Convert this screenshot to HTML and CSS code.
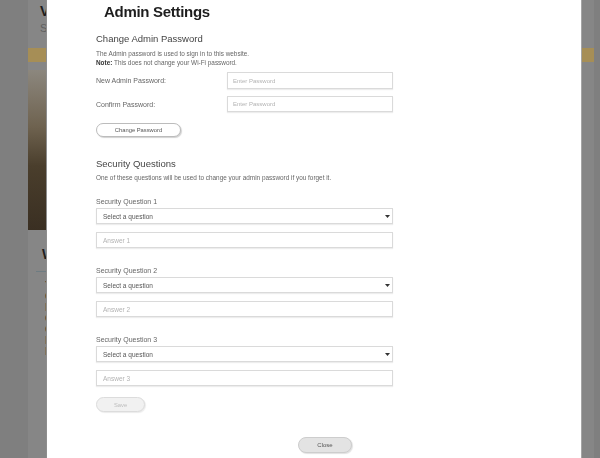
FILE: index.html
```html
<!DOCTYPE html>
<html lang="en">
<head>
<meta charset="utf-8">
<title>Admin Settings</title>
<link rel="stylesheet" href="styles.css">
</head>
<body>
<div class="site">
  <header class="site-head">
    <div class="site-title">V</div>
    <div class="site-sub">S</div>
  </header>
  <div class="banner"></div>
  <div class="site-body">
    <div class="hero"></div>
    <section class="card">
      <h2 class="card-title">W</h2>
      <div class="card-rule"></div>
      <p class="card-text">Y<br>C<br>D<br>G<br>C<br>N<br>D</p>
    </section>
  </div>
</div>

<div class="overlay">
  <div class="modal">
    <h1 class="modal-title">Admin Settings</h1>

    <h2 class="section-title">Change Admin Password</h2>
    <p class="note">The Admin password is used to sign in to this website.<br><b>Note:</b> This does not change your Wi-Fi password.</p>

    <div class="form-row">
      <label class="row-label">New Admin Password:</label>
      <input class="field field-short" type="password" placeholder="Enter Password">
    </div>
    <div class="form-row form-row-2">
      <label class="row-label">Confirm Password:</label>
      <input class="field field-short field-16" type="password" placeholder="Enter Password">
    </div>
    <button class="pill btn-change" type="button">Change Password</button>

    <h2 class="section-title section-2">Security Questions</h2>
    <p class="desc">One of these questions will be used to change your admin password if you forget it.</p>

    <div class="question question-first">
      <div class="q-label">Security Question 1</div>
      <div class="select"><span>Select a question</span><svg class="caret" width="5" height="3" viewBox="0 0 5 3"><path d="M0 0H5L2.5 3Z" fill="#333"/></svg></div>
      <input class="field field-long" type="text" placeholder="Answer 1">
    </div>
    <div class="question">
      <div class="q-label">Security Question 2</div>
      <div class="select"><span>Select a question</span><svg class="caret" width="5" height="3" viewBox="0 0 5 3"><path d="M0 0H5L2.5 3Z" fill="#333"/></svg></div>
      <input class="field field-long" type="text" placeholder="Answer 2">
    </div>
    <div class="question">
      <div class="q-label">Security Question 3</div>
      <div class="select"><span>Select a question</span><svg class="caret" width="5" height="3" viewBox="0 0 5 3"><path d="M0 0H5L2.5 3Z" fill="#333"/></svg></div>
      <input class="field field-long" type="text" placeholder="Answer 3">
    </div>

    <button class="pill btn-save" type="button" disabled>Save</button>

    <div class="modal-footer">
      <button class="pill btn-close" type="button">Close</button>
    </div>
  </div>
</div>
</body>
</html>
```

FILE: styles.css
```css
* { box-sizing: border-box; }

html, body {
  margin: 0;
  padding: 0;
  height: 100%;
}

body {
  background: #7f7f7f;
  font-family: "Liberation Sans", Arial, sans-serif;
  overflow: hidden;
}

/* dimmed page behind the dialog */
.site {
  margin-left: 28px;
  width: 566px;
  height: 458px;
  background: #868686;
  overflow: hidden;
}

.site-head {
  padding: 3px 12px 0;
}

.site-title {
  font-size: 14px;
  line-height: 16px;
  font-weight: bold;
  color: #1c1c1c;
}

.site-sub {
  margin-top: 2px;
  font-size: 11px;
  line-height: 14px;
  color: #606060;
}

.banner {
  margin-top: 13px;
  height: 14px;
  background: #a68e56;
}

.site-body {
  padding-top: 8px;
}

.hero {
  width: 300px;
  height: 160px;
  background: linear-gradient(to bottom, #8c877e 0%, #6f6350 35%, #4a3e2c 60%, #3a2f22 100%);
}

.card {
  padding: 0 8px;
}

.card-title {
  margin: 16px 0 0 6px;
  font-size: 14px;
  line-height: 16px;
  font-weight: bold;
  color: #1e1e1e;
}

.card-rule {
  margin-top: 9px;
  height: 1px;
  background: #6e7c82;
  width: 300px;
}

.card-text {
  margin: 8px 0 0 9px;
  font-size: 11px;
  line-height: 11px;
  color: #222;
}

/* dialog */
.overlay {
  position: fixed;
  inset: 0;
  display: flex;
  padding-left: 47px;
}

.modal {
  width: 534px;
  height: 100%;
  background: #fff;
  box-shadow: 1px 0 0 #a5a5a5, -1px 0 0 #8e8e8e;
  padding: 0 49px;
  overflow: hidden;
}

.modal-title {
  margin: 3px 0 0 8px;
  font-size: 15px;
  line-height: 18px;
  font-weight: bold;
  letter-spacing: -0.3px;
  color: #1e1e1e;
}

.section-title {
  margin: 12px 0 0;
  font-size: 9.5px;
  line-height: 12px;
  font-weight: normal;
  color: #444;
}

.section-2 {
  margin-top: 21px;
}

.note {
  margin: 4px 0 0;
  font-size: 6.4px;
  line-height: 9px;
  color: #666;
}

.note b {
  color: #333;
}

.form-row {
  display: grid;
  grid-template-columns: 131px 166px;
  align-items: center;
  margin-top: 5px;
}

.form-row-2 {
  margin-top: 7px;
}

.row-label {
  font-size: 7px;
  color: #666;
}

.field {
  display: block;
  margin: 0;
  border: 1px solid #dadada;
  border-radius: 0;
  background: #fff;
  box-shadow: 0 1px 1px rgba(0, 0, 0, 0.07);
  font-family: "Liberation Sans", Arial, sans-serif;
  outline: none;
}

.field::placeholder {
  color: #b3b3b3;
}

.field-short {
  width: 166px;
  height: 17px;
  padding: 0 5px;
  font-size: 6px;
}

.field-16 {
  height: 16px;
}

.field-long {
  width: 297px;
  height: 16px;
  margin-top: 8px;
  padding: 0 6px;
  font-size: 6.5px;
}

.pill {
  display: block;
  margin: 0;
  padding: 0;
  border-radius: 999px;
  font-family: "Liberation Sans", Arial, sans-serif;
  text-align: center;
}

.btn-change {
  margin-top: 11px;
  width: 85px;
  height: 14px;
  border: 1px solid #bcbcbc;
  background: #fff;
  box-shadow: 1px 1px 1px rgba(0, 0, 0, 0.18);
  font-size: 5.8px;
  color: #555;
}

.desc {
  margin: 3px 0 0;
  font-size: 6.4px;
  line-height: 9px;
  color: #666;
}

.question {
  margin-top: 18px;
}

.question-first {
  margin-top: 15px;
}

.q-label {
  font-size: 7px;
  line-height: 9px;
  color: #666;
}

.select {
  margin-top: 2px;
  width: 297px;
  height: 16px;
  display: flex;
  align-items: center;
  justify-content: space-between;
  padding: 0 2px 0 6px;
  border: 1px solid #dadada;
  box-shadow: 0 1px 1px rgba(0, 0, 0, 0.07);
  font-size: 6.5px;
  color: #555;
}

.caret {
  display: block;
}

.btn-save {
  margin-top: 11px;
  width: 49px;
  height: 15px;
  border: 1px solid #dcdcdc;
  background: #f1f1f1;
  box-shadow: 1px 1px 1px rgba(0, 0, 0, 0.08);
  font-size: 5.8px;
  color: #bdbdbd;
}

.modal-footer {
  display: flex;
  justify-content: center;
  padding-left: 22px;
  margin-top: 25px;
}

.btn-close {
  width: 54px;
  height: 16px;
  border: 1px solid #cdcdcd;
  background: #e3e3e3;
  box-shadow: 1px 1px 1px rgba(0, 0, 0, 0.12);
  font-size: 6px;
  color: #555;
}
```
